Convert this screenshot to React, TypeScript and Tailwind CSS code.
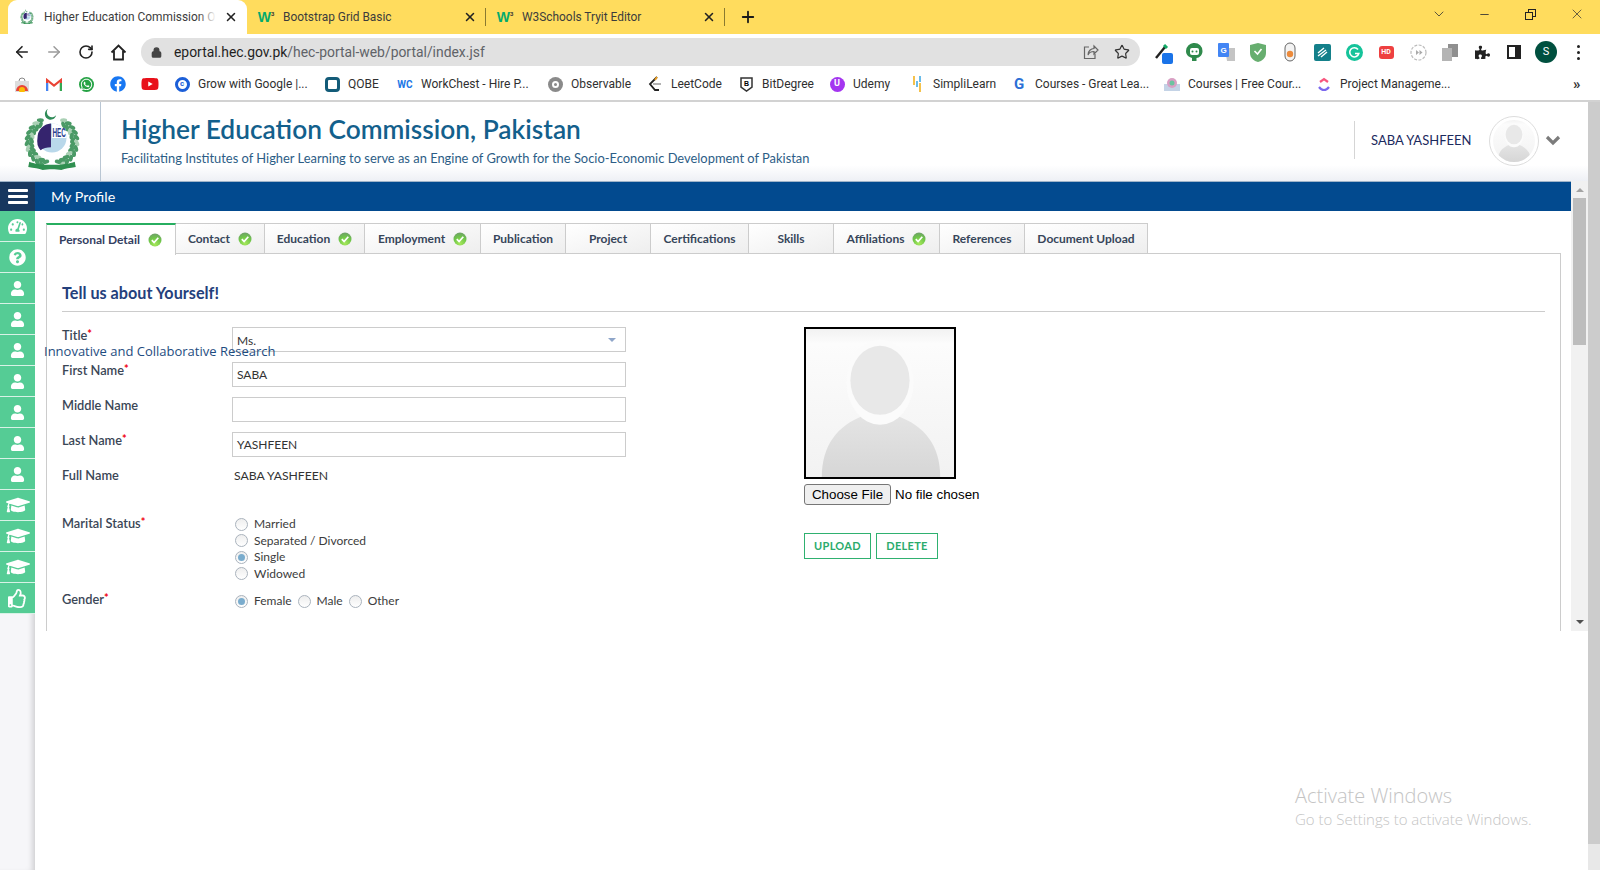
import { ArrowLeft, ArrowRight, ChevronDown, Lock, Minus, Plus, RotateCw, Star, X } from "lucide-react";
import { FaFacebook, FaGraduationCap, FaQuestionCircle, FaRegThumbsUp, FaTachometerAlt, FaUser, FaWhatsapp, FaYoutube, FaPuzzlePiece } from "react-icons/fa";
import type { ReactNode } from "react";

const uiFont = "font-['Roboto','Liberation_Sans',sans-serif]";

function HecLogo({ size = 56 }: { size?: number }) {
  // wreath leaves laid out round the seal, two rows on each side
  const leaves = Array.from({ length: 44 }, (_, i) => {
    const side = i % 2 === 0 ? 1 : -1;
    const step = Math.floor(i / 2);
    const deg = -62 + step * 6.4;
    const a = (deg * Math.PI) / 180;
    const r = step % 2 === 0 ? 24 : 20;
    return { x: 28 + side * r * Math.cos(a), y: 33 + r * Math.sin(a), rot: side * (deg + 90 + (step % 2 ? 30 : -30)), k: i };
  });
  return (
    <svg width={size} height={size * 1.14} viewBox="0 0 56 64">
      <path d="M24 1a5.500 5.500 0 1 0 8 6 4.500 4.500 0 1 1-8-6z" fill="#2e8b57" />
      {leaves.map((l) => (
        <ellipse key={l.k} cx={l.x} cy={l.y} rx="3.400" ry="2" fill={l.k % 5 === 0 ? "#a9d0b4" : "#4a9a66"} transform={`rotate(${l.rot} ${l.x} ${l.y})`} />
      ))}
      <path d="M6 52c8 4 35 4 44 0l1 5c-6 1-10 1-14 3-5-1-13-1-18 0-4-2-8-2-14-3z" fill="#2f8f50" />
      <circle cx="28" cy="29" r="14" fill="#b9d8ea" />
      <path d="M14 29a14 14 0 0 1 13-14v23c-4 0-8 1-10 3a14 14 0 0 1-3-12z" fill="#35246e" />
      <path d="M28 15a14 14 0 0 1 14 14H28z" fill="#fff" />
      <text x="28.500" y="28" fontSize="12" fontWeight="700" fill="#2a3f8f" fontFamily="Liberation Sans, sans-serif" textLength="13" lengthAdjust="spacingAndGlyphs">HEC</text>
    </svg>
  );
}

function W3Icon() {
  return (
    <span className="w-4 flex items-start justify-center text-[#04aa6d] font-bold text-[14px] leading-[14px] font-['Liberation_Sans',sans-serif]">
      W<span className="text-[6px] leading-[8px] text-[#333]">3</span>
    </span>
  );
}

function BrowserTab({ title, icon, active, divider }: { title: string; icon: ReactNode; active?: boolean; divider?: boolean }) {
  return (
    <div className={`relative w-[239px] h-[34px] flex items-center pr-[8px] pl-[11px] ${active ? "bg-white rounded-t-[9px]" : ""}`}>
      <span className="w-4 h-4 flex items-center justify-center shrink-0">{icon}</span>
      <span className="relative ml-[9px] pt-[1px] flex-1 overflow-hidden whitespace-nowrap text-[11.900px] text-[#3c3c3c]">
        {title}
        {active && <i className="absolute right-0 top-0 h-full w-[18px] bg-gradient-to-r from-transparent to-white" />}
      </span>
      <X size={14} strokeWidth={2.6} className="ml-2 mr-[1px] shrink-0 text-[#222]" />
      {divider && <span className="absolute right-0 top-[8px] h-[18px] w-px bg-[#8a7a30]" />}
    </div>
  );
}

function TabStrip() {
  return (
    <div className={`h-[34px] bg-[#ffdc5d] flex pl-2 ${uiFont}`}>
      <BrowserTab active title="Higher Education Commission Online" icon={<HecLogo size={14} />} />
      <BrowserTab divider title="Bootstrap Grid Basic" icon={<W3Icon />} />
      <BrowserTab divider title="W3Schools Tryit Editor" icon={<W3Icon />} />
      <div className="ml-[14px] h-[34px] flex items-center">
        <Plus size={18} strokeWidth={2.4} className="text-[#1a1a1a]" />
      </div>
      <div className="ml-auto flex h-[28px] items-center text-[#333]">
        <ChevronDown size={16} strokeWidth={1.2} className="mr-[31px]" />
        <Minus size={13} strokeWidth={1.6} className="mr-[34px]" />
        <span className="relative w-[11px] h-[11px] mr-[33px]">
          <span className="absolute right-0 top-0 w-[8px] h-[8px] border border-[#222]" />
          <span className="absolute left-0 bottom-0 w-[8px] h-[8px] border border-[#222] bg-[#ffdc5d]" />
        </span>
        <X size={16} strokeWidth={1.1} className="mr-[15px]" />
      </div>
    </div>
  );
}

function ExtIcons() {
  return (
    <div className="flex ml-[6px] items-center">
      <span className="w-8 flex justify-center pl-[4px]">
        <svg width="24" height="24" viewBox="0 0 24 24"><path d="M4 18L13 7" stroke="#222" strokeWidth="2.4" /><path d="M12 5l3 3" stroke="#1a6" strokeWidth="3" /><rect x="10" y="13" width="11" height="11" rx="2" fill="#1a73e8" /></svg>
      </span>
      <span className="w-8 flex justify-center"><svg width="17" height="19" viewBox="0 0 17 19"><path d="M8.500 0a8 8 0 0 1 8 8c0 4-3 7-6 7v3H6v-3c-3-1-6-3-6-7a8 8 0 0 1 8.500-8z" fill="#2f8a4c" /><rect x="4" y="5" width="9" height="7" rx="2" fill="#fff" /><circle cx="6.500" cy="8.500" r="1" fill="#2f8a4c" /><circle cx="10.500" cy="8.500" r="1" fill="#2f8a4c" /></svg></span>
      <span className="w-8 flex justify-center"><svg width="17" height="19" viewBox="0 0 17 19"><path d="M7 5h10v13H9z" fill="#c4c4c4" /><rect width="11" height="14" rx="1" fill="#4285f4" /><text x="2.500" y="10" fontSize="8" fill="#fff" fontWeight="700" fontFamily="Liberation Sans">G</text></svg></span>
      <span className="w-8 flex justify-center"><svg width="16" height="19" viewBox="0 0 16 19"><path d="M8 0l8 2v8c0 5-4 8-8 9-4-1-8-4-8-9V2z" fill="#67ae6f" /><path d="M4.500 8l3 3 4-5" fill="none" stroke="#fff" strokeWidth="1.6" /></svg></span>
      <span className="w-8 flex justify-center"><svg width="12" height="20" viewBox="0 0 12 20"><rect x="1" y="1" width="10" height="18" rx="5" fill="#f3f3f3" stroke="#666" /><circle cx="6" cy="12" r="3.200" fill="#ec8a3b" /></svg></span>
      <span className="w-8 flex justify-center"><svg width="17" height="17" viewBox="0 0 17 17"><rect width="17" height="17" rx="2" fill="#14808a" /><path d="M4 9l6-5M4 12l8-6M7 13l6-5" stroke="#fff" strokeWidth="1.4" /></svg></span>
      <span className="w-8 flex justify-center"><svg width="17" height="17" viewBox="0 0 17 17"><circle cx="8.500" cy="8.500" r="8.500" fill="#15c39a" /><path d="M12 5.500a4.600 4.600 0 1 0 .8 4H9" fill="none" stroke="#fff" strokeWidth="1.6" /></svg></span>
      <span className="w-8 flex justify-center"><span className="w-[15px] h-[13px] rounded-[3px] bg-[#ee4040] text-white text-[7px] font-bold leading-[13px] text-center">HD</span></span>
      <span className="w-8 flex justify-center"><svg width="17" height="17" viewBox="0 0 17 17"><circle cx="8.500" cy="8.500" r="7.500" fill="none" stroke="#bbb" strokeWidth="1.2" strokeDasharray="3 1.4" /><path d="M6 6l3 2.500L6 11zM9.500 6l3 2.500-3 2.500z" fill="#aaa" /></svg></span>
      <span className="w-8 flex justify-center"><svg width="16" height="17" viewBox="0 0 16 17"><rect x="6" y="0" width="10" height="13" fill="#8f8f8f" /><rect x="0" y="4" width="10" height="13" fill="#b4b4b4" /></svg></span>
      <span className="w-8 flex justify-center"><FaPuzzlePiece size={15} className="text-[#222]" /></span>
      <span className="w-8 flex justify-center"><span className="w-[14px] h-[14px] border-[2px] border-[#222] border-r-[6px]" /></span>
      <span className="w-8 flex justify-center"><span className="w-[22px] h-[22px] rounded-full bg-[#00503f] text-white text-[11px] leading-[22px] text-center">S</span></span>
      <span className="w-8 flex flex-col items-center gap-[3px]"><i className="w-[3px] h-[3px] rounded-full bg-[#222]" /><i className="w-[3px] h-[3px] rounded-full bg-[#222]" /><i className="w-[3px] h-[3px] rounded-full bg-[#222]" /></span>
    </div>
  );
}

function Toolbar() {
  return (
    <div className={`h-[36px] bg-white flex items-center pl-[6px] ${uiFont}`}>
      <span className="w-8 flex justify-center"><ArrowLeft size={18} strokeWidth={2.2} className="text-[#222]" /></span>
      <span className="w-8 flex justify-center"><ArrowRight size={18} strokeWidth={2} className="text-[#9a9a9a]" /></span>
      <span className="w-8 flex justify-center"><RotateCw size={16} strokeWidth={2.4} className="text-[#222]" /></span>
      <span className="w-8 flex justify-center">
        <svg width="17" height="17" viewBox="0 0 17 17" fill="none" stroke="#222" strokeWidth="1.8"><path d="M1.500 8.500L8.500 1.500l7 7M4 7v8.500h9V7" /></svg>
      </span>
      <div className="ml-[7px] w-[999px] h-[28px] rounded-full bg-[#e1e1e1] flex items-center pl-[10px] pr-[10px]">
        <Lock size={11} strokeWidth={3} className="text-[#444]" fill="#444" />
        <span className="ml-[12px] text-[13.900px] whitespace-nowrap text-[#1f1f1f]">eportal.hec.gov.pk<span className="text-[#5f6368]">/hec-portal-web/portal/index.jsf</span></span>
        <span className="ml-auto flex items-center gap-[15px]">
          <svg width="16" height="16" viewBox="0 0 16 16" fill="none" stroke="#666" strokeWidth="1.200">
            <path d="M6 3H1.500v11.500H12V10" />
            <path d="M5 11c0-4 3-6.500 6-6.500V2l4 4-4 4V7.500C8.500 7.500 6 8.500 5 11z" />
          </svg>
          <Star size={16} strokeWidth={1.8} className="text-[#333]" />
        </span>
      </div>
      <ExtIcons />
    </div>
  );
}

function Dot({ className, children }: { className: string; children?: ReactNode }) {
  return <span className={`w-[15px] h-[15px] rounded-full flex items-center justify-center text-white font-bold text-[9px] ${className}`}>{children}</span>;
}

const plainBookmarks: { width: string; icon: ReactNode }[] = [
  { width: "w-[32px]", icon: <svg width="14" height="15" viewBox="0 0 14 15"><rect y="4" width="14" height="11" fill="#ddd" /><path d="M1 14a6 6 0 0 1 12 0z" fill="#ea4335" /><circle cx="7" cy="13" r="3" fill="#fbbc05" /><path d="M4 4a3 3 0 0 1 6 0" stroke="#888" fill="none" /></svg> },
  { width: "w-[32px]", icon: <svg width="16" height="13" viewBox="0 0 16 13"><path d="M1 13V2l7 5.500L15 2v11" fill="none" stroke="#ea4335" strokeWidth="2.2" /><path d="M1 13V5" stroke="#4285f4" strokeWidth="2.4" /><path d="M15 13V5" stroke="#34a853" strokeWidth="2.4" /></svg> },
  { width: "w-[32px]", icon: <span className="w-[15px] h-[15px] rounded-full bg-[#25a244] flex items-center justify-center"><FaWhatsapp size={13} className="text-white" /></span> },
  { width: "w-[32px]", icon: <FaFacebook size={16} className="text-[#1877f2]" /> },
  { width: "w-[32px]", icon: <FaYoutube size={18} className="text-[#e8101a]" /> },
];

const labelledBookmarks: { label: string; width: string; icon: ReactNode }[] = [
  { label: "Grow with Google |...", width: "w-[150px]", icon: <span className="w-[15px] h-[15px] rounded-full border-[3px] border-[#1c5fd8] flex items-center justify-center text-[#1c5fd8] font-bold text-[8px]">c</span> },
  { label: "QOBE", width: "w-[73px]", icon: <span className="w-[15px] h-[15px] rounded-[4px] border-[3px] border-[#135b78]" /> },
  { label: "WorkChest - Hire P...", width: "w-[150px]", icon: <span className="text-[#2277e6] text-[10px] font-bold">WC</span> },
  { label: "Observable", width: "w-[100px]", icon: <span className="w-[15px] h-[15px] rounded-full bg-[#8a8a8a] flex items-center justify-center"><i className="w-[7px] h-[7px] rounded-full border-[2px] border-white" /></span> },
  { label: "LeetCode", width: "w-[91px]", icon: <svg width="14" height="16" viewBox="0 0 14 16" fill="none" strokeWidth="1.8"><path d="M9 1L2 8l5 6h4" stroke="#222" /><path d="M5 8h8" stroke="#aaa" /><path d="M9 1L7 4" stroke="#f0a020" /></svg> },
  { label: "BitDegree", width: "w-[91px]", icon: <svg width="13" height="15" viewBox="0 0 13 15"><path d="M1 1h11v9l-5.500 4L1 10z" fill="#fff" stroke="#333" strokeWidth="1.5" /><text x="4" y="9" fontSize="7" fontWeight="700" fontFamily="Liberation Sans">B</text></svg> },
  { label: "Udemy", width: "w-[80px]", icon: <Dot className="bg-[#a435f0]">U</Dot> },
  { label: "SimpliLearn", width: "w-[102px]", icon: <svg width="10" height="16" viewBox="0 0 10 16"><path d="M2 0v9M8 7v9" stroke="#f0a800" strokeWidth="1.4" /><path d="M5 5v6" stroke="#2a9fe0" strokeWidth="1.4" /><path d="M8 0v6" stroke="#2a9fe0" strokeWidth="1.4" /></svg> },
  { label: "Courses - Great Lea...", width: "w-[153px]", icon: <span className="text-[#2b6fd6] text-[15px] font-bold leading-none">G</span> },
  { label: "Courses | Free Cour...", width: "w-[152px]", icon: <svg width="16" height="14" viewBox="0 0 16 14"><rect y="7" width="16" height="7" fill="#c4d3e6" /><circle cx="8" cy="6" r="5" fill="#d9a0c4" /><circle cx="8" cy="6" r="2.500" fill="#6cc3a0" /></svg> },
  { label: "Project Manageme...", width: "w-[265px]", icon: <svg width="14" height="15" viewBox="0 0 14 15" fill="none" strokeWidth="2.2"><path d="M3 5l4-3 4 3" stroke="#f8567e" /><path d="M2 10c3 4 7 4 10 0" stroke="#7b68ee" /></svg> },
];

function Bookmarks() {
  return (
    <div className={`h-[32px] bg-white flex items-center pl-[6px] pb-[2px] border-b-2 border-[#d2d2d2] text-[12px] text-[#2f2f2f] ${uiFont}`}>
      {plainBookmarks.map((b, i) => (
        <span key={i} className={`${b.width} flex justify-center`}>{b.icon}</span>
      ))}
      {labelledBookmarks.map((b) => (
        <span key={b.label} className={`${b.width} flex items-center whitespace-nowrap`}>
          <span className="w-8 shrink-0 flex justify-center">{b.icon}</span>
          <span>{b.label}</span>
        </span>
      ))}
      <span className="text-[15px] font-bold text-[#333]">»</span>
    </div>
  );
}

function Header() {
  return (
    <div className="h-[80px] flex bg-gradient-to-b from-white from-80% to-[#eef0f5] border-b border-[#9fb4c9]">
      <div className="w-[101px] shrink-0 border-r border-[#b9c6d3] flex items-center justify-center pl-[4px]">
        <HecLogo size={58} />
      </div>
      <div className="pl-[20px] pt-[9px]">
        <h1 className="text-[26.300px] leading-[36px] font-semibold text-[#13608c]">Higher Education Commission, Pakistan</h1>
        <p className="mt-[2px] text-[12.900px] leading-[18px] text-[#2c5d86]">Facilitating Institutes of Higher Learning to serve as an Engine of Growth for the Socio-Economic Development of Pakistan</p>
      </div>
      <div className="ml-auto flex items-center pb-[2px]">
        <div className="h-[38px] w-px bg-[#d5d5d5] mt-[-1px]" />
        <span className="ml-[16px] text-[13px] text-[#1c2a5e] w-[118px]">SABA YASHFEEN</span>
        <span className="w-[50px] h-[50px] rounded-full border border-[#ddd] p-[3px] bg-white">
          <Avatar className="w-full h-full rounded-full" />
        </span>
        <svg width="16" height="11" viewBox="0 0 16 11" className="ml-[6px] mr-[27px]"><path d="M2 2l6 6 6-6" fill="none" stroke="#7c7c7c" strokeWidth="3.200" /></svg>
      </div>
    </div>
  );
}

function Avatar({ className }: { className?: string }) {
  return (
    <svg viewBox="0 0 150 150" className={className} preserveAspectRatio="none">
      <defs>
        <linearGradient id="avbg" x1="0" y1="0" x2="0" y2="1">
          <stop offset="0" stopColor="#f2f2f2" />
          <stop offset="0.1" stopColor="#fcfcfc" />
          <stop offset="1" stopColor="#f2f2f2" />
        </linearGradient>
        <linearGradient id="avbody" x1="0" y1="0" x2="0" y2="1">
          <stop offset="0" stopColor="#e4e4e4" />
          <stop offset="1" stopColor="#d6d6d6" />
        </linearGradient>
      </defs>
      <rect width="150" height="150" fill="url(#avbg)" />
      <path d="M16 150c0-32 16-52 42-62h34c28 10 44 30 44 62z" fill="url(#avbody)" />
      <ellipse cx="75" cy="54" rx="34" ry="43" fill="#fbfbfb" />
      <ellipse cx="75" cy="52" rx="30" ry="35" fill="#e8e8e8" />
    </svg>
  );
}

function SideItem({ children }: { children: ReactNode }) {
  return <div className="h-[31px] bg-[#55cc95] border-b border-[#d8f2e6] flex items-center justify-center text-white">{children}</div>;
}

function Sidebar() {
  return (
    <div className="w-[35px] shrink-0 flex flex-col bg-[#f6f6f9] shadow-[inset_-6px_0_6px_-4px_rgba(0,0,0,0.18)]">
      <div className="h-[29px] bg-[#17375f] flex flex-col items-center justify-center gap-[3px]">
        <i className="w-[20px] h-[3px] bg-white rounded-[1px]" />
        <i className="w-[20px] h-[3px] bg-white rounded-[1px]" />
        <i className="w-[20px] h-[3px] bg-white rounded-[1px]" />
      </div>
      <SideItem><FaTachometerAlt size={19} /></SideItem>
      <SideItem><FaQuestionCircle size={17} /></SideItem>
      {[0, 1, 2, 3, 4, 5, 6].map((i) => (
        <SideItem key={i}><FaUser size={15} /></SideItem>
      ))}
      {[0, 1, 2].map((i) => (
        <SideItem key={i}><FaGraduationCap size={24} /></SideItem>
      ))}
      <SideItem><FaRegThumbsUp size={19} /></SideItem>
    </div>
  );
}

function Check() {
  return (
    <svg width="14" height="14" viewBox="0 0 14 14" className="shrink-0">
      <defs>
        <radialGradient id="okg" cx="0.5" cy="0.85" r="0.85">
          <stop offset="0" stopColor="#a6e85a" />
          <stop offset="0.6" stopColor="#6fc649" />
          <stop offset="1" stopColor="#6f9f6a" />
        </radialGradient>
      </defs>
      <circle cx="7" cy="7" r="6.500" fill="url(#okg)" />
      <path d="M3.800 7.200l2.300 2.300 4.200-4.800" fill="none" stroke="#fff" strokeWidth="1.700" />
    </svg>
  );
}

const tabs = [
  { label: "Contact", width: "w-[89px]", done: true },
  { label: "Education", width: "w-[100px]", done: true },
  { label: "Employment", width: "w-[116px]", done: true },
  { label: "Publication", width: "w-[85px]" },
  { label: "Project", width: "w-[85px]" },
  { label: "Certifications", width: "w-[98px]" },
  { label: "Skills", width: "w-[85px]" },
  { label: "Affiliations", width: "w-[106px]", done: true },
  { label: "References", width: "w-[85px]" },
  { label: "Document Upload", width: "w-[123px]" },
];

function Tabs() {
  return (
    <div className="flex h-[31px] ml-[11px] text-[12px] text-[#37465a] font-bold">
      <div className="w-[130px] h-[32px] relative z-10 bg-white border-t-2 border-t-[#27ae60] border-l border-l-[#ccc] border-r border-r-[#ccc] flex items-center pl-[12px] gap-[8px]">
        <span className="text-[#34405f]">Personal Detail</span>
        <Check />
      </div>
      {tabs.map((t) => (
        <div key={t.label} className={`${t.width} h-[31px] pt-[1px] border-t border-r border-b border-[#ccc] bg-gradient-to-br from-white to-[#eeeeee] flex items-center justify-center gap-[8px]`}>
          <span>{t.label}</span>
          {t.done && <Check />}
        </div>
      ))}
    </div>
  );
}

function Label({ text, required }: { text: string; required?: boolean }) {
  return (
    <span className="w-[170px] shrink-0 -mt-[1px] text-[12.800px] leading-[18px] font-semibold text-[#3a4656]">
      {text}
      {required && <span className="text-[#f00010] text-[11px] font-bold leading-none align-[2px]">*</span>}
    </span>
  );
}

function TextRow({ label, value, required, select }: { label: string; value: string; required?: boolean; select?: boolean }) {
  return (
    <div className="flex h-[25px] mb-[10px]">
      <Label text={label} required={required} />
      <div className="w-[394px] h-[25px] border border-[#ccc] flex items-center pl-[4px] pr-[9px] text-[12px] text-[#333]">
        <span className={select ? "pt-[2px]" : ""}>{value}</span>
        {select && <span className="ml-auto border-x-[4px] border-x-transparent border-t-[4px] border-t-[#8fa6c9]" />}
      </div>
    </div>
  );
}

function Radio({ label, checked }: { label: string; checked?: boolean }) {
  return (
    <span className="flex items-center text-[12px] text-[#3c3c3c] whitespace-nowrap">
      <span className="w-[13px] h-[13px] rounded-full border border-[#aab3bd] bg-gradient-to-b from-[#eeeeee] to-white flex items-center justify-center">
        {checked && <i className="w-[7px] h-[7px] rounded-full bg-[#7aaccd]" />}
      </span>
      <span className="ml-[6px]">{label}</span>
    </span>
  );
}

function ProfileForm() {
  return (
    <div className="flex">
      <div className="w-[742px] shrink-0">
        <TextRow label="Title" value="Ms." required select />
        <TextRow label="First Name" value="SABA" required />
        <TextRow label="Middle Name" value="" />
        <TextRow label="Last Name" value="YASHFEEN" required />
        <div className="flex h-[47px]">
          <Label text="Full Name" />
          <span className="text-[12.200px] leading-[18px] text-[#333] ml-[2px]">SABA YASHFEEN</span>
        </div>
        <div className="flex h-[76px] pt-[1px]">
          <Label text="Marital Status" required />
          <div className="flex flex-col ml-[3px] mt-[1px] leading-[16.500px]">
            <Radio label="Married" />
            <Radio label="Separated / Divorced" />
            <Radio label="Single" checked />
            <Radio label="Widowed" />
          </div>
        </div>
        <div className="flex pt-[1px]">
          <Label text="Gender" required />
          <div className="flex ml-[3px] gap-[6px] pt-[1px]">
            <Radio label="Female" checked />
            <Radio label="Male" />
            <Radio label="Other" />
          </div>
        </div>
      </div>
      <div>
        <div className="w-[152px] h-[152px] border-2 border-black">
          <Avatar className="w-full h-full" />
        </div>
        <div className="mt-[5px] flex items-center font-['Liberation_Sans',sans-serif] text-[13.330px] text-black">
          <button className="w-[87px] h-[21px] bg-[#efefef] border border-[#767676] rounded-[3px]">Choose File</button>
          <span className="ml-[4px]">No file chosen</span>
        </div>
        <div className="mt-[28px] flex gap-[5px] text-[11px] font-bold tracking-[0.3px] text-[#2bab6c]">
          <button className="w-[67px] h-[26px] border border-[#2fb170]">UPLOAD</button>
          <button className="w-[62px] h-[26px] border border-[#2fb170]">DELETE</button>
        </div>
      </div>
    </div>
  );
}

function InnerScrollbar() {
  return (
    <div className="w-[17px] h-[450px] shrink-0 bg-[#f1f1f1] flex flex-col items-center pt-[7px]">
      <span className="border-x-[4px] border-x-transparent border-b-[4px] border-b-[#a3a3a3]" />
      <span className="mt-[6px] w-[13px] h-[147px] bg-[#bdbdbd]" />
      <span className="mt-auto mb-[7px] border-x-[4px] border-x-transparent border-t-[4px] border-t-[#505050]" />
    </div>
  );
}

export default function App() {
  return (
    <div className="relative w-[1600px] h-[870px] overflow-hidden bg-white flex flex-col font-['Lato',sans-serif]">
      <TabStrip />
      <Toolbar />
      <Bookmarks />
      <div className="flex-1 flex min-h-0">
        <div className="w-[1588px] flex flex-col">
          <Header />
          <div className="flex-1 flex min-h-0">
            <Sidebar />
            <div className="w-[1536px] relative">
              <div className="h-[29px] bg-[#024a8f] flex items-center pl-[16px] text-[14.300px] text-white">My Profile</div>
              <div className="pt-[12px] h-[420px] overflow-hidden">
                <Tabs />
                <div className="w-[1515px] ml-[11px] h-[379px] border-x border-t border-[#ccc] -mt-[1px] pl-[15px] overflow-hidden">
                  <h2 className="mt-[29px] text-[16.200px] leading-[20px] font-bold text-[#24407c]">Tell us about Yourself!</h2>
                  <div className="mt-[8px] mb-[15px] w-[1483px] h-px bg-[#ccc]" />
                  <ProfileForm />
                </div>
              </div>
              <span className="absolute left-[9px] top-[160px] text-[13px] leading-[18px] text-[#1e4c80] font-['Open_Sans',sans-serif] whitespace-nowrap">Innovative and Collaborative Research</span>
            </div>
            <div className="-mt-[1px]"><InnerScrollbar /></div>
          </div>
        </div>
        <div className="w-3 bg-[#cccccc]" />
      </div>
      <div className="absolute left-[1295px] top-[783px] font-['Open_Sans',sans-serif] font-light text-[#c4c4c4]">
        <div className="text-[20px] leading-[26px]">Activate Windows</div>
        <div className="text-[15px] leading-[20px]">Go to Settings to activate Windows.</div>
      </div>
      <div className="absolute right-0 top-[844px] w-3 h-[26px] bg-[#e8e8e8]" />
    </div>
  );
}
